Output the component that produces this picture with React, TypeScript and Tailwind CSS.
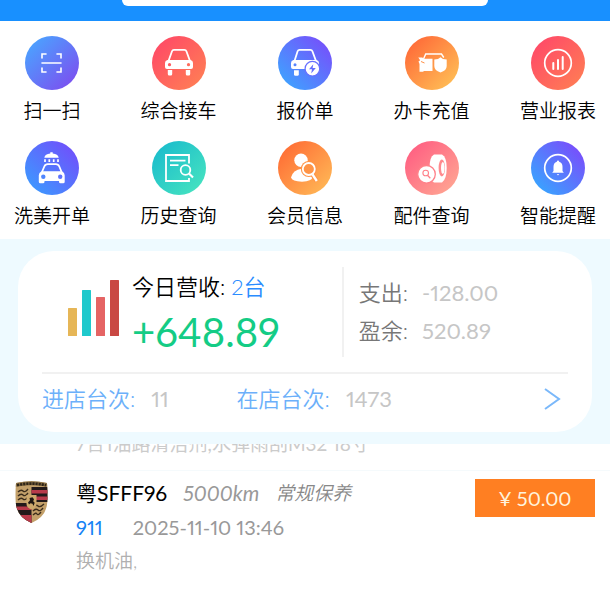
import type { ReactNode } from "react";

interface MenuEntry {
  label: string;
  from: string;
  to: string;
  // gradient direction: start and end corners
  dir: [number, number, number, number];
  glyph: ReactNode;
}

const DOWN: [number, number, number, number] = [0, 0, 1, 1];
const UP: [number, number, number, number] = [0, 1, 1, 0];

const menu: MenuEntry[] = [
  {
    label: "扫一扫",
    from: "#4ba3ff",
    to: "#7b50f0",
    dir: DOWN,
    glyph: (
      <g fill="none" stroke="#fff" strokeWidth="1.6" strokeLinecap="round">
        <path d="M17 22v-4h4M32 18h4v4M17 32v4h4M36 32v4h-4M17 27h19" />
      </g>
    ),
  },
  {
    label: "综合接车",
    from: "#ff4a66",
    to: "#ff7d55",
    dir: DOWN,
    glyph: (
      <g fill="#fff">
        <path
          d="M16.500 25 20 15.200q.5-1.400 2-1.400h10.400q1.500 0 2 1.400L38 25"
          fill="none"
          stroke="#fff"
          strokeWidth="1.8"
        />
        <path d="M15.500 24h23q2.500.5 2.500 3v4q0 2-2 2H15q-2 0-2-2v-4q0-2.500 2.500-3z" />
        <path d="M15.800 34h4.400v4q0 1.600-1.400 1.600h-1.600q-1.400 0-1.400-1.600zM33.800 34h4.400v4q0 1.600-1.400 1.600h-1.600q-1.400 0-1.400-1.600z" />
        <circle cx="17.500" cy="28.700" r="1.600" fill="#ff5a60" />
        <circle cx="36.500" cy="28.700" r="1.600" fill="#ff6c5c" />
      </g>
    ),
  },
  {
    label: "报价单",
    from: "#3fa2ff",
    to: "#7650fb",
    dir: UP,
    glyph: (
      <g fill="#fff">
        <path
          d="M16.500 25 19.600 15.200q.5-1.400 2-1.400h10.800q1.500 0 2 1.400L38 25"
          fill="none"
          stroke="#fff"
          strokeWidth="1.800"
        />
        <path d="M15.500 24h23q2.500.5 2.500 3v6H15q-2 0-2-2v-4q0-2.500 2.500-3z" />
        <path d="M16 34.300h4.800v4q0 1.500-1.400 1.500h-2q-1.400 0-1.400-1.500z" />
        <circle cx="17" cy="28.700" r="1.500" fill="#5684fe" />
        <circle cx="34.400" cy="32.700" r="7.300" stroke="#6670ff" strokeWidth="1.200" />
        <path d="M35.300 28.200l-4.300 5h3l-.8 4.300 4.600-5.500h-3.200z" fill="#646ffd" />
      </g>
    ),
  },
  {
    label: "办卡充值",
    from: "#ff6a38",
    to: "#ffbd55",
    dir: DOWN,
    glyph: (
      <g fill="#fff">
        <path d="M18.500 23 20.700 18h15.800l2.300 3.500" fill="none" stroke="#fff" strokeWidth="1.400" />
        <path d="M13.300 21.500h4l1.200 1.300h9V35h-9v.8h-4V28l-1-2.500 1.600-1.300z" />
        <path d="M35.500 21.300l2.500 1.700 3.700.5v6.500q0 4.500-6.200 6.500-6.200-2-6.200-6.500v-6.500l3.700-.5z" />
        <path d="M16 25.500l3.500 1.500" stroke="#ff9046" strokeWidth="1" />
      </g>
    ),
  },
  {
    label: "营业报表",
    from: "#ff4a68",
    to: "#ff7b55",
    dir: DOWN,
    glyph: (
      <g fill="none" stroke="#fff" strokeWidth="1.700">
        <circle cx="27" cy="27" r="13.300" />
        <path d="M22.300 33v-6M27 33v-9M31.700 33V21" strokeWidth="2" strokeLinecap="round" />
      </g>
    ),
  },
  {
    label: "洗美开单",
    from: "#3d98ff",
    to: "#7050fb",
    dir: UP,
    glyph: (
      <g fill="#fff">
        <path d="M19.300 16.800q.7-3.600 6-4.200v-1.300h2.400v1.300q5.300.6 6 4.200z" />
        <path d="M20 18.300v2.600M24.300 18.300v2.600M28.700 18.300v2.600M33 18.300v2.600" stroke="#fff" strokeWidth="1.700" />
        <path
          d="M17 31l2.300-5.500q1-2.300 3.500-2.300h8q2.500 0 3.500 2.300L36.600 31"
          fill="none"
          stroke="#fff"
          strokeWidth="1.800"
        />
        <path d="M16.500 30.300h20.500q2.700 1.300 2.700 4v6.500q0 1.500-1.500 1.500h-2.700q-1.500 0-1.500-1.500v-.8H19.500v.8q0 1.500-1.500 1.500h-2.700q-1.500 0-1.500-1.500v-6.500q0-2.700 2.700-4z" />
        <circle cx="18.300" cy="35.800" r="2.200" fill="#4f86fe" />
        <circle cx="35.200" cy="35.800" r="2.200" fill="#5e74fd" />
      </g>
    ),
  },
  {
    label: "历史查询",
    from: "#1bbdcc",
    to: "#45e2c0",
    dir: DOWN,
    glyph: (
      <g fill="none" stroke="#fff" strokeWidth="1.800">
        <path d="M37 22.500V14H14v26h23v-3M18 19.700h15.500M18 24.200h8.500" />
        <circle cx="33.500" cy="29" r="4.800" />
        <path d="M37 32.500l4 4" strokeWidth="2.200" />
      </g>
    ),
  },
  {
    label: "会员信息",
    from: "#ff6d35",
    to: "#ffb655",
    dir: DOWN,
    glyph: (
      <g fill="#fff">
        <circle cx="23" cy="19.300" r="6.700" />
        <path d="M13 36.500q2-7.800 10.500-8.800 8.500 0 11 8.300-.5 4.300-10.500 4.700-10-.2-11-4.200z" />
        <circle cx="30.800" cy="28" r="8" fill="#ff9447" />
        <path d="M34.500 33.500l4.200 6.500" stroke="#ff9447" strokeWidth="4.500" />
        <circle cx="30.800" cy="28" r="6" fill="#ff9447" stroke="#fff" strokeWidth="1.800" />
        <path d="M34.500 33.300l4.300 6.700" stroke="#fff" strokeWidth="2.400" />
      </g>
    ),
  },
  {
    label: "配件查询",
    from: "#ff5f82",
    to: "#ffa492",
    dir: DOWN,
    glyph: (
      <g fill="#fff">
        <path d="M29 13.500h8q4.700 2.500 4.700 13.500T37 41.500h-8q-4.500-2-4.500-14T29 13.500z" />
        <ellipse cx="36.800" cy="27" rx="3.200" ry="8.500" fill="#ff8a8e" />
        <ellipse cx="37.800" cy="27" rx="1.800" ry="6" />
        <circle cx="21.500" cy="33.300" r="8.800" stroke="#ff8089" strokeWidth="1.300" />
        <circle cx="20.700" cy="32" r="2.800" fill="none" stroke="#ff8089" strokeWidth="1.100" />
        <path d="M22.500 34.200l2.800 3" stroke="#ff8089" strokeWidth="1.300" />
      </g>
    ),
  },
  {
    label: "智能提醒",
    from: "#38a5ff",
    to: "#7a4cfb",
    dir: UP,
    glyph: (
      <g fill="#fff">
        <circle cx="27" cy="27" r="13.300" fill="none" stroke="#fff" strokeWidth="1.700" />
        <path d="M27 19.500q1 0 1.200 1.200 3.300 1 3.300 5v4.300l1.300 1.800H21.200l1.300-1.800v-4.300q0-4 3.300-5 .2-1.200 1.200-1.200z" />
        <path d="M25.800 33.200h2.400q-.2 1.100-1.200 1.100t-1.200-1.100z" />
      </g>
    ),
  },
];

const MenuIcon = ({ item, id }: { item: MenuEntry; id: string }) => (
  <svg viewBox="0 0 54 54" className="size-[54px]" aria-hidden="true">
    <defs>
      <linearGradient id={id} x1={item.dir[0]} y1={item.dir[1]} x2={item.dir[2]} y2={item.dir[3]}>
        <stop offset="0.100" stopColor={item.from} />
        <stop offset="0.900" stopColor={item.to} />
      </linearGradient>
    </defs>
    <circle cx="27" cy="27" r="27" fill={`url(#${id})`} />
    {item.glyph}
  </svg>
);

const BarsIcon = () => (
  <svg viewBox="0 0 52 56" className="mt-[13px] h-14 w-[52px]" aria-hidden="true">
    <rect x="0" y="28" width="9" height="28" rx="0.500" fill="#e6b657" />
    <rect x="14" y="10" width="9" height="46" rx="0.500" fill="#1fc9cc" />
    <rect x="28" y="17" width="9" height="39" rx="0.500" fill="#e56464" />
    <rect x="42" y="0" width="9" height="56" rx="0.500" fill="#c94843" />
  </svg>
);

const BrandCrest = () => (
  <svg viewBox="0 0 33 42" className="mt-[5px] h-[42px] w-[33px] shrink-0" aria-hidden="true">
    <defs>
      <clipPath id="crest">
        <path d="M1 2Q16.500-1.500 32 2q.8 9.500.3 19-.6 14.500-15.800 21Q1.300 35.500.7 21 .2 11.500 1 2z" />
      </clipPath>
    </defs>
    <g clipPath="url(#crest)">
      <rect width="33" height="42" fill="#c3a06a" />
      <path d="M0 0h33v5.800Q16.500 2.500 0 5.800z" fill="#8a7046" />
      <path
        d="M2 4.200Q16.500 1 31 4.200"
        fill="none"
        stroke="#2e2418"
        strokeWidth="2.600"
        strokeDasharray="2.200 0.900"
      />
      <path d="M16.500 6H33v15H16.500zM0 22h16.500v20H0z" fill="#22191a" />
      <path d="M16.500 9H33v3.500H16.500zM16.500 15.500H33V19H16.500zM0 25.500h16.500V29H0zM0 34h16.500v8H0z" fill="#b83a4a" />
      <path
        d="M3 11q3-3 5-1t5-2M3 15q3-3 5-1t5-2M3 19q3-3 5-1t5-2M18 26q3-3 5-1t6-2M18 30q3-3 5-1t5-2M18 34q3-3 4-1t4-2"
        fill="none"
        stroke="#3b2c1b"
        strokeWidth="1.300"
      />
      <path d="M11.500 14h10V23q0 3.500-5 5.500-5-2-5-5.500z" fill="#cda96c" />
      <path d="M14.500 17l3-.8 1.500 2-.8 2 1.500 1.500-1.200 3.300-1-2.200-2-.6-1.500 1.200-1-1.800 2-2.400z" fill="#1e1712" />
    </g>
  </svg>
);

const SearchHeader = () => (
  <header className="flex justify-center bg-[#1890ff] pb-[15px]">
    <input
      type="search"
      aria-label="搜索"
      className="h-1.5 w-3/5 rounded-b-lg bg-white outline-none"
    />
  </header>
);

const MenuGrid = () => {
  const rows = [menu.slice(0, 5), menu.slice(5)];

  return (
    <nav className="flex flex-col gap-4 px-3 pt-[15px] pb-[9px]">
      {rows.map((row, r) => (
        <div key={r} className="flex justify-between">
          {row.map((item, i) => (
            <button key={item.label} type="button" className="flex w-20 flex-col items-center gap-[7px]">
              <MenuIcon item={item} id={`menu-${r}-${i}`} />
              <span className="text-[19px] leading-7 whitespace-nowrap text-black">{item.label}</span>
            </button>
          ))}
        </div>
      ))}
    </nav>
  );
};

const Summary = () => (
  <section className="bg-[#eefaff] px-[18px] py-3">
    <div className="rounded-[36px] bg-white px-6 pt-4">
      <div className="flex h-[90px] items-stretch">
        <div className="flex w-[57%] items-start gap-3 pl-[26px]">
          <BarsIcon />
          <div className="whitespace-nowrap">
            <p className="text-[22px] leading-10 text-black">
              今日营收: <span className="text-[#2a8cff]">2台</span>
            </p>
            <p className="text-[40px] leading-[50px] font-normal text-[#14cc85]">+648.89</p>
          </div>
        </div>
        <dl className="grid flex-1 grid-cols-[auto_1fr] content-center gap-x-3.5 border-l-2 border-[#f1f1f1] pl-[15px] text-[22px] leading-[38px] whitespace-nowrap">
          <dt className="text-[#777]">支出:</dt>
          <dd className="font-normal text-[#c6c6c6]">-128.00</dd>
          <dt className="text-[#777]">盈余:</dt>
          <dd className="font-normal text-[#c6c6c6]">520.89</dd>
        </dl>
      </div>
      <div className="mt-[15px] flex items-center border-t-2 border-[#f1f1f1] pt-1 pb-3 text-[22px] leading-[42px] whitespace-nowrap">
        <p className="w-[37%] text-[#6cb0fa]">
          进店台次:<span className="ml-4 font-normal text-[#c6c6c6]">11</span>
        </p>
        <p className="flex-1 text-[#6cb0fa]">
          在店台次:<span className="ml-4 font-normal text-[#c6c6c6]">1473</span>
        </p>
        <button type="button" aria-label="查看详情" className="text-[#7ab8fa]">
          <svg viewBox="0 0 32 32" className="size-8" fill="none" stroke="currentColor" strokeWidth="2">
            <path d="M9 6l14 10L9 26" />
          </svg>
        </button>
      </div>
    </div>
  </section>
);

const OrderList = () => (
  <main>
    {/* previous order, scrolled up under the summary card */}
    <div className="flex h-[27px] items-end overflow-hidden border-b border-[#f5fafc] pb-3 pl-[76px]">
      <p className="text-[19px] leading-7 font-normal whitespace-nowrap text-[#cbcbcb]">
        7合1油路清洁剂,水弹雨刮M32 18寸
      </p>
    </div>
    <article className="flex items-start gap-7 px-[15px] pt-[5px]">
      <BrandCrest />
      <div className="flex-1 leading-[34px] whitespace-nowrap">
        <div className="flex items-center gap-4 text-[19px] text-[#888] italic">
          <h2 className="text-[21px] leading-[34px] font-normal text-black not-italic">粤SFFF96</h2>
          <span className="text-[21px] leading-[34px] font-normal text-[#999]">5000km</span>
          <span>常规保养</span>
        </div>
        <div className="flex gap-[30px] text-[20px] leading-[34px] font-normal text-[#999]">
          <a href="#911" className="text-[#1683f5]">
            911
          </a>
          <time dateTime="2025-11-10T13:46">2025-11-10 13:46</time>
        </div>
        <p className="text-[19px] text-[#b0b0b0]">换机油,</p>
      </div>
      <button
        type="button"
        className="mt-[3px] h-[38px] w-[120px] bg-[#ff7f22] text-xl font-normal whitespace-nowrap text-[#fff3dc]"
      >
        ¥ 50.00
      </button>
    </article>
  </main>
);

export default function App() {
  return (
    <div className="min-h-screen bg-white font-['Lato','Noto_Sans_CJK_SC',sans-serif] font-[350] proportional-nums">
      <SearchHeader />
      <MenuGrid />
      <Summary />
      <OrderList />
    </div>
  );
}
